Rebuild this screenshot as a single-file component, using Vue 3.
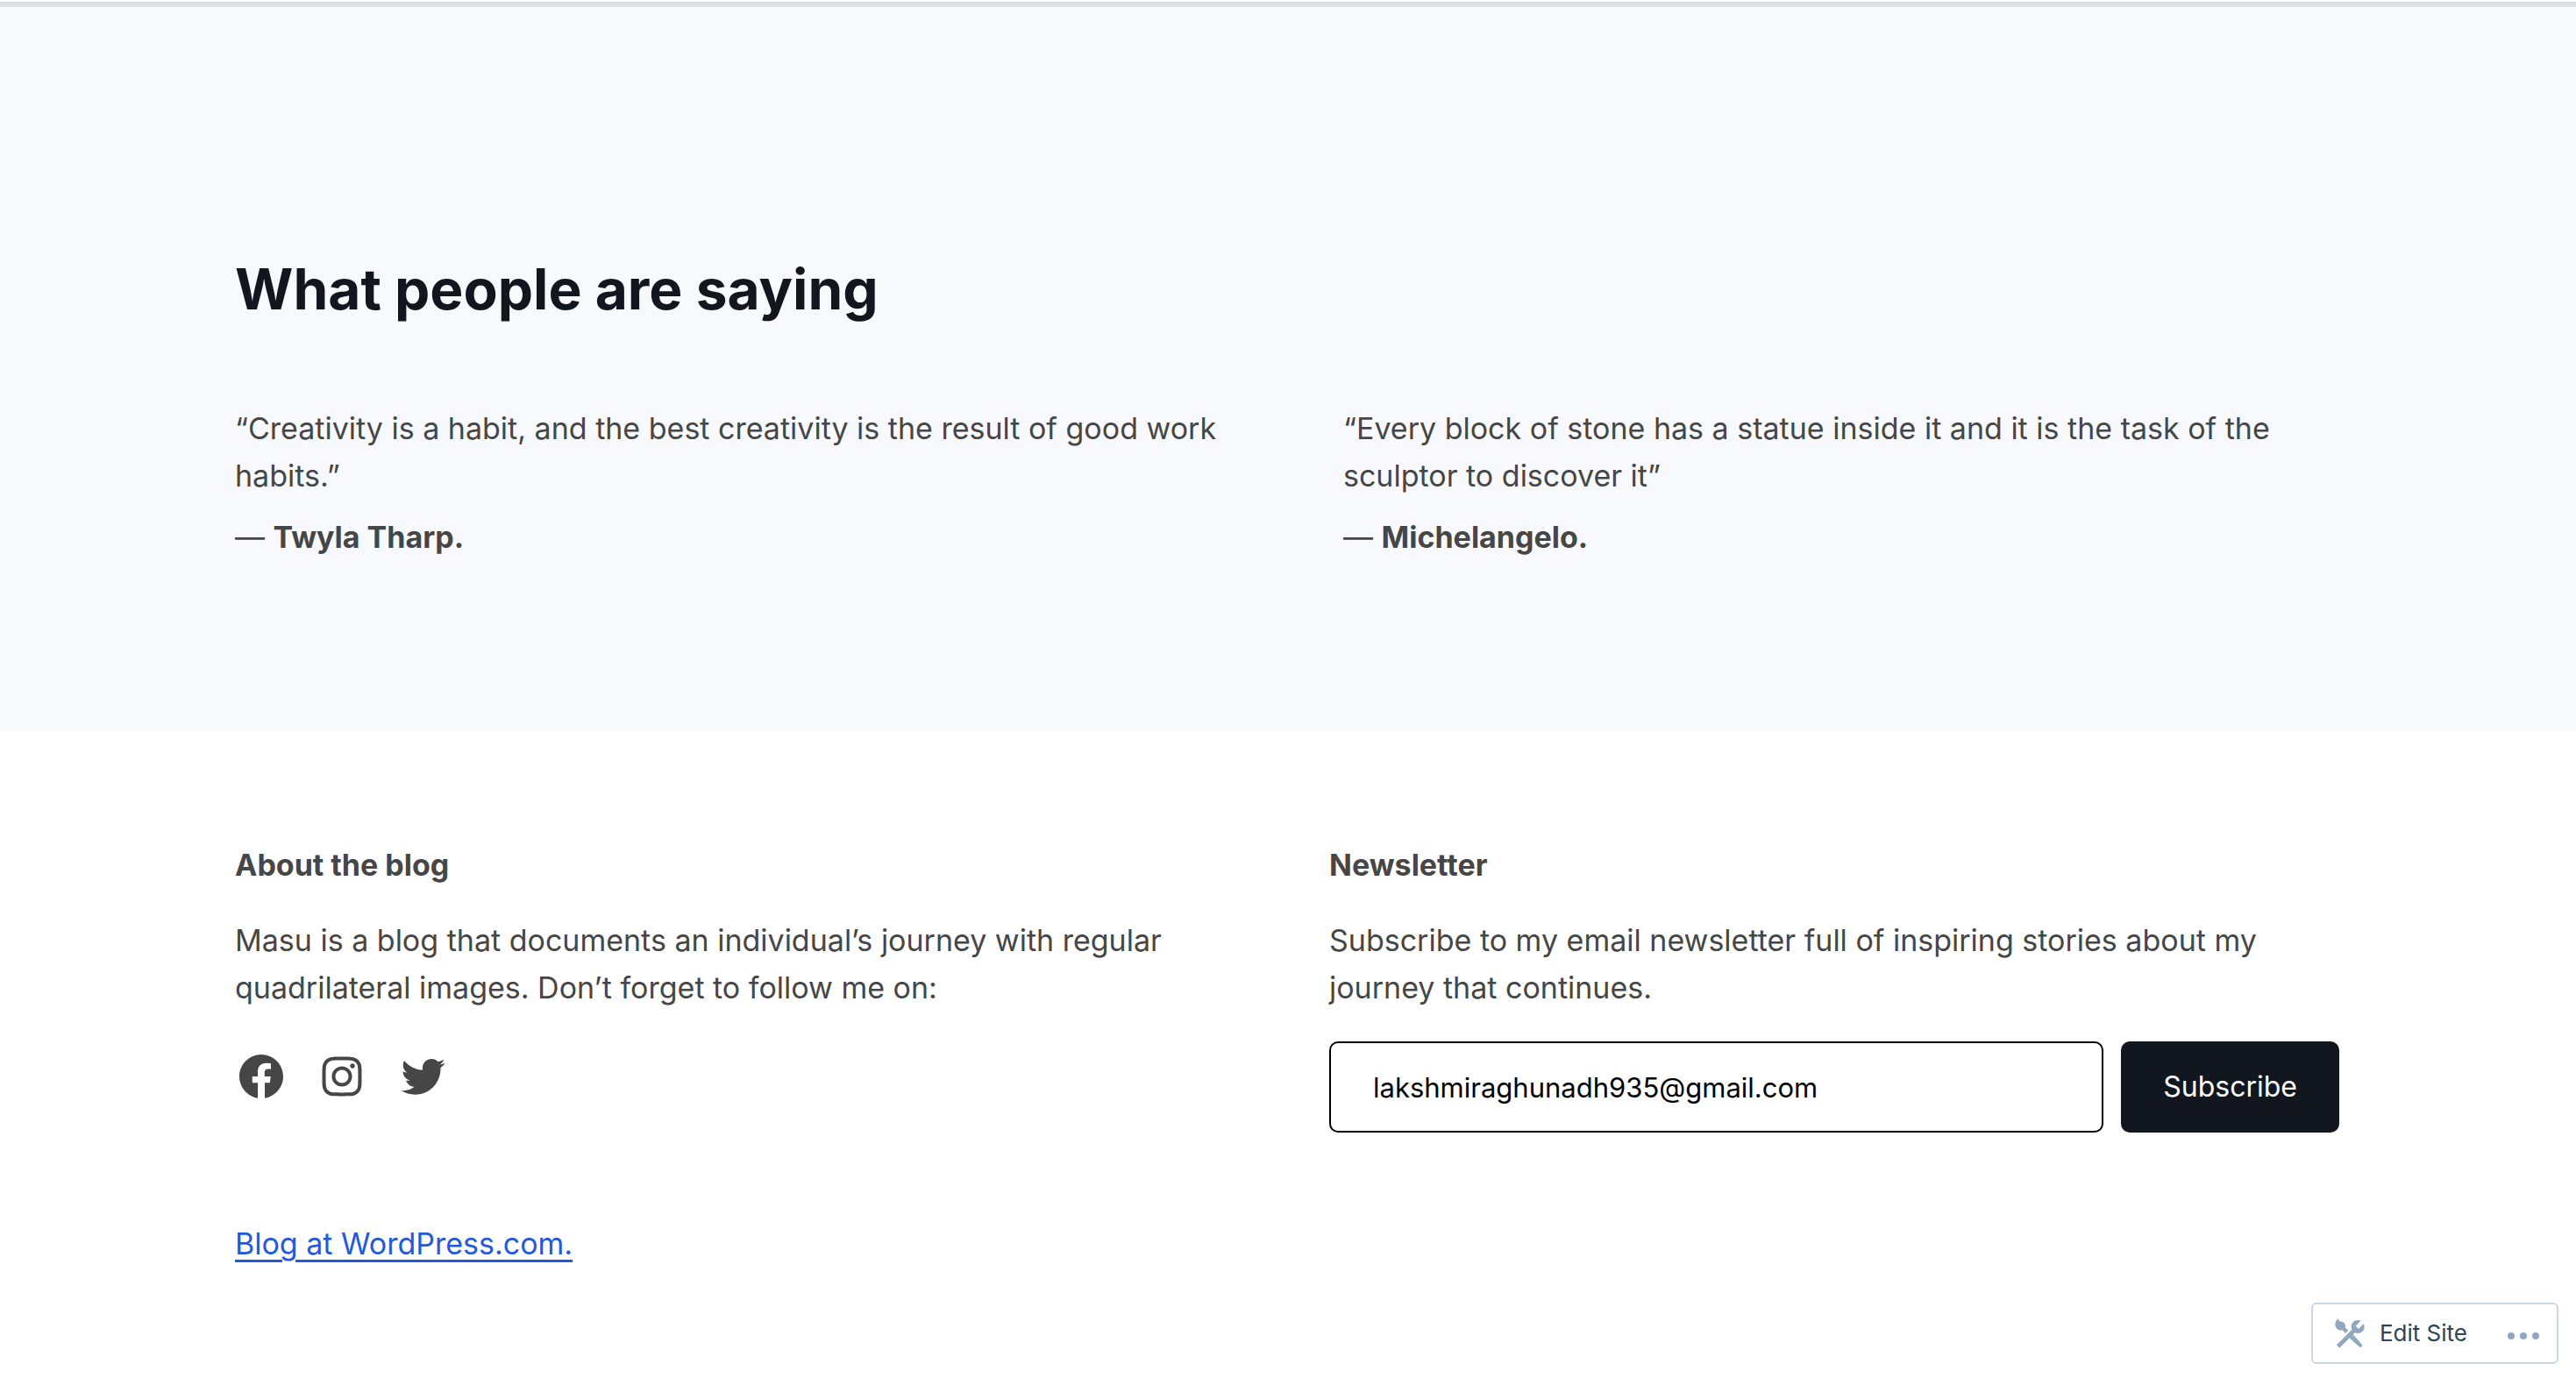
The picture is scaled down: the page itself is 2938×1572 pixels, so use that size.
<script setup>
import { ref } from 'vue'

const email = ref('lakshmiraghunadh935@gmail.com')

const quotes = [
  {
    text: '“Creativity is a habit, and the best creativity is the result of good work habits.”',
    author: 'Twyla Tharp.',
  },
  {
    text: '“Every block of stone has a statue inside it and it is the task of the sculptor to discover it”',
    author: 'Michelangelo.',
  },
]

const socials = [
  {
    name: 'Facebook',
    path: 'M12 2C6.5 2 2 6.5 2 12c0 5 3.7 9.1 8.4 9.9v-7H7.9V12h2.5V9.8c0-2.5 1.5-3.9 3.8-3.9 1.1 0 2.2.2 2.2.2v2.5h-1.3c-1.2 0-1.6.8-1.6 1.6V12h2.8l-.4 2.9h-2.3v7C18.3 21.1 22 17 22 12c0-5.5-4.5-10-10-10z',
  },
  {
    name: 'Instagram',
    path: 'M12,4.622c2.403,0,2.688,0.009,3.637,0.052c0.877,0.04,1.354,0.187,1.671,0.31c0.42,0.163,0.72,0.358,1.035,0.673 c0.315,0.315,0.51,0.615,0.673,1.035c0.123,0.317,0.27,0.794,0.31,1.671c0.043,0.949,0.052,1.234,0.052,3.637 s-0.009,2.688-0.052,3.637c-0.04,0.877-0.187,1.354-0.31,1.671c-0.163,0.42-0.358,0.72-0.673,1.035 c-0.315,0.315-0.615,0.51-1.035,0.673c-0.317,0.123-0.794,0.27-1.671,0.31c-0.949,0.043-1.233,0.052-3.637,0.052 s-2.688-0.009-3.637-0.052c-0.877-0.04-1.354-0.187-1.671-0.31c-0.42-0.163-0.72-0.358-1.035-0.673 c-0.315-0.315-0.51-0.615-0.673-1.035c-0.123-0.317-0.27-0.794-0.31-1.671C4.631,14.688,4.622,14.403,4.622,12 s0.009-2.688,0.052-3.637c0.04-0.877,0.187-1.354,0.31-1.671c0.163-0.42,0.358-0.72,0.673-1.035 c0.315-0.315,0.615-0.51,1.035-0.673c0.317-0.123,0.794-0.27,1.671-0.31C9.312,4.631,9.597,4.622,12,4.622 M12,3 C9.556,3,9.249,3.01,8.289,3.054C7.331,3.098,6.677,3.25,6.105,3.472C5.513,3.702,5.011,4.01,4.511,4.511 c-0.5,0.5-0.808,1.002-1.038,1.594C3.25,6.677,3.098,7.331,3.054,8.289C3.01,9.249,3,9.556,3,12c0,2.444,0.01,2.751,0.054,3.711 c0.044,0.958,0.196,1.612,0.418,2.185c0.23,0.592,0.538,1.094,1.038,1.594c0.5,0.5,1.002,0.808,1.594,1.038 c0.572,0.222,1.227,0.375,2.185,0.418C9.249,20.99,9.556,21,12,21s2.751-0.01,3.711-0.054c0.958-0.044,1.612-0.196,2.185-0.418 c0.592-0.23,1.094-0.538,1.594-1.038c0.5-0.5,0.808-1.002,1.038-1.594c0.222-0.572,0.375-1.227,0.418-2.185 C20.99,14.751,21,14.444,21,12s-0.01-2.751-0.054-3.711c-0.044-0.958-0.196-1.612-0.418-2.185c-0.23-0.592-0.538-1.094-1.038-1.594 c-0.5-0.5-1.002-0.808-1.594-1.038c-0.572-0.222-1.227-0.375-2.185-0.418C14.751,3.01,14.444,3,12,3L12,3z M12,7.378 c-2.552,0-4.622,2.069-4.622,4.622S9.448,16.622,12,16.622s4.622-2.069,4.622-4.622S14.552,7.378,12,7.378z M12,15 c-1.657,0-3-1.343-3-3s1.343-3,3-3s3,1.343,3,3S13.657,15,12,15z M16.804,6.116c-0.596,0-1.08,0.484-1.08,1.08 s0.484,1.08,1.08,1.08c0.596,0,1.08-0.484,1.08-1.08S17.401,6.116,16.804,6.116z',
  },
  {
    name: 'Twitter',
    path: 'M22.23,5.924c-0.736,0.326-1.527,0.547-2.357,0.646c0.847-0.508,1.498-1.312,1.804-2.27 c-0.793,0.47-1.671,0.812-2.606,0.996C18.324,4.498,17.257,4,16.077,4c-2.266,0-4.103,1.837-4.103,4.103 c0,0.322,0.036,0.635,0.106,0.935C8.67,8.867,5.647,7.234,3.623,4.751C3.27,5.357,3.067,6.062,3.067,6.814 c0,1.424,0.724,2.679,1.825,3.415c-0.673-0.021-1.305-0.206-1.859-0.513c0,0.017,0,0.034,0,0.052c0,1.988,1.414,3.647,3.292,4.023 c-0.344,0.094-0.707,0.144-1.081,0.144c-0.264,0-0.52-0.026-0.772-0.074c0.522,1.63,2.038,2.816,3.833,2.85 c-1.404,1.1-3.174,1.756-5.096,1.756c-0.331,0-0.658-0.019-0.979-0.057c1.816,1.164,3.973,1.843,6.29,1.843 c7.547,0,11.675-6.252,11.675-11.675c0-0.178-0.004-0.355-0.012-0.531C20.985,7.47,21.68,6.747,22.23,5.924z',
  },
]
</script>

<template>
  <div class="page">
    <div class="edge"></div>

    <main class="testimonials">
      <div class="inner">
        <h2 class="title">What people are saying</h2>
        <div class="quotes">
          <blockquote v-for="quote in quotes" :key="quote.author" class="quote">
            <p>{{ quote.text }}</p>
            <cite>— <strong>{{ quote.author }}</strong></cite>
          </blockquote>
        </div>
      </div>
    </main>

    <footer class="footer">
      <div class="inner">
        <div class="columns">
          <section>
            <h3>About the blog</h3>
            <p>Masu is a blog that documents an individual’s journey with regular quadrilateral images. Don’t forget to follow me on:</p>
            <nav class="socials" aria-label="Social links">
              <a v-for="item in socials" :key="item.name" href="#" :aria-label="item.name">
                <svg viewBox="0 0 24 24" aria-hidden="true"><path :d="item.path" /></svg>
              </a>
            </nav>
          </section>

          <section>
            <h3>Newsletter</h3>
            <p>Subscribe to my email newsletter full of inspiring stories about my journey that continues.</p>
            <form class="subscribe" @submit.prevent>
              <input v-model="email" type="email" aria-label="Email address" />
              <button type="submit">Subscribe</button>
            </form>
          </section>
        </div>
        <p class="credit"><a href="#">Blog at WordPress.com.</a></p>
      </div>
    </footer>

    <aside class="actionbar">
      <a href="#" class="edit">
        <svg viewBox="0 0 24 24" aria-hidden="true">
          <path d="M2 6c0-1.505.78-3.08 2-4 0 .845.69 2 2 2 1.657 0 3 1.343 3 3 0 .386-.08.752-.212 1.09.74.594 1.476 1.19 2.19 1.81L8.9 11.98c-.62-.716-1.214-1.454-1.807-2.192C6.753 9.92 6.387 10 6 10c-2.21 0-4-1.79-4-4zm12.152 6.848l1.34-1.34c.607.304 1.283.492 2.008.492 2.485 0 4.5-2.015 4.5-4.5 0-.725-.188-1.4-.493-2.007L18 9l-2-2 3.507-3.507C18.9 3.188 18.225 3 17.5 3 15.015 3 13 5.015 13 7.5c0 .725.188 1.4.493 2.007L3 20l2 2 6.848-6.848c1.885 1.928 3.874 3.753 5.977 5.45l1.425 1.148 1.5-1.5-1.15-1.425c-1.695-2.103-3.52-4.092-5.448-5.977z" />
        </svg>
        <span>Edit Site</span>
      </a>
      <button type="button" class="more" aria-label="More options">
        <svg viewBox="0 0 36 8" aria-hidden="true">
          <circle cx="4" cy="4" r="4" />
          <circle cx="18" cy="4" r="4" />
          <circle cx="32" cy="4" r="4" />
        </svg>
      </button>
    </aside>
  </div>
</template>

<style>
body {
  margin: 0;
  background: #fff;
}
</style>

<style scoped>
.page {
  font-family: Inter, "Liberation Sans", sans-serif;
  font-size: 34px;
  line-height: 54px;
  color: #464646;
}

.edge {
  height: 6px;
  border-top: 2px solid #fff;
  background: linear-gradient(#d9dadf, #e1e2e7);
}

.inner {
  max-width: 2400px;
  margin: 0 auto;
}

p,
h2,
h3,
blockquote {
  margin: 0;
}

.testimonials {
  padding: 282px 270px 194px 268px;
  background: #f8f9fd;
}

.title {
  margin-bottom: 92px;
  font-size: 64px;
  line-height: 80px;
  font-weight: 700;
  color: #12171f;
}

.quotes {
  display: grid;
  grid-template-columns: 1fr 1fr;
  gap: 128px;
}

.quote {
  display: flex;
  flex-direction: column;
  gap: 16px;
}

cite {
  font-style: normal;
}

strong,
h3 {
  font-weight: 700;
}

.footer {
  padding: 126px 270px 126px 268px;
}

.columns {
  display: grid;
  grid-template-columns: 1fr 1fr;
  gap: 96px;
}

h3 {
  margin-bottom: 32px;
  font-size: 34px;
}

.socials {
  display: flex;
  gap: 32px;
  margin-top: 44px;
}

.socials a {
  display: flex;
}

.socials svg {
  width: 60px;
  height: 60px;
  fill: #464646;
}

.subscribe {
  display: flex;
  gap: 20px;
  margin-top: 34px;
}

.subscribe input,
.subscribe button {
  box-sizing: border-box;
  height: 104px;
  padding: 0 48px;
  border-radius: 10px;
  font: inherit;
}

.subscribe input {
  flex: 1;
  min-width: 0;
  border: 2px solid #000;
  background: #fff;
  font-size: 31px;
  color: #000;
}

.subscribe button {
  border: 0;
  background: #12171f;
  font-size: 32px;
  color: #fff;
}

.credit {
  margin-top: 100px;
}

.credit a {
  color: #2359db;
  text-decoration-thickness: 3px;
  text-underline-offset: 6px;
}

.actionbar {
  position: fixed;
  right: 20px;
  bottom: 16px;
  display: flex;
  align-items: center;
  gap: 46px;
  box-sizing: border-box;
  height: 70px;
  padding: 0 20px 0 22px;
  border: 2px solid #c8d7e1;
  border-radius: 6px;
  background: #fff;
}

.edit {
  display: flex;
  align-items: center;
  gap: 14px;
  font-size: 26px;
  line-height: 36px;
  color: #2e4453;
  text-decoration: none;
}

.edit svg {
  width: 40px;
  height: 40px;
  fill: #8fa8bf;
}

.more {
  display: flex;
  padding: 6px 0 0;
  border: 0;
  background: none;
}

.more svg {
  width: 36px;
  height: 8px;
  fill: #8fa8bf;
}
</style>
